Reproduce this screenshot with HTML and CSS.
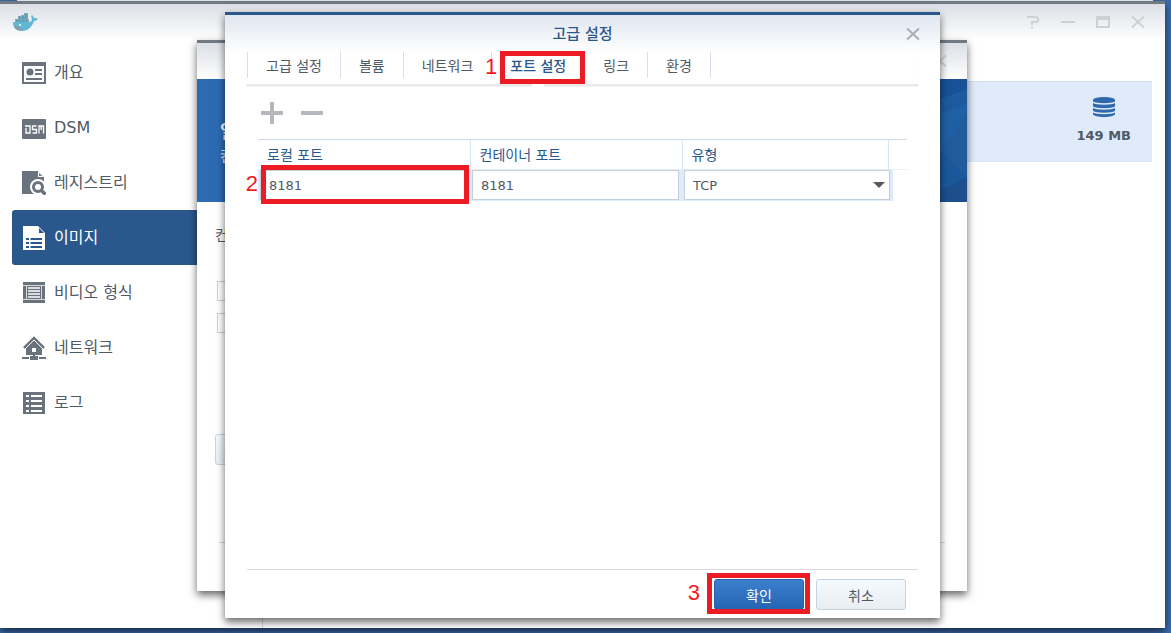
FILE: index.html
```html
<!DOCTYPE html>
<html lang="ko">
<head>
  <meta charset="UTF-8">
  <title>Docker</title>
  <link rel="stylesheet" href="styles.css">
</head>
<body>
  <div class="desktop">
    <div class="back-window"></div>

    <!-- Docker main window -->
    <div class="window docker">
      <div class="titlebar">
        <svg class="logo" viewBox="0 0 26 20">
          <path fill="#7fa9b8" d="M3 7h3V4h3V3h3V1h4v6h1v4H3z"/>
          <path fill="#5b9fb6" d="M4 8h2v2H4zM7 5h2v2H7zM7 8h2v2H7zM10 4h2v3h-2zM10 8h2v2h-2zM13 2h2v5h-2zM13 8h2v2h-2z"/>
          <path fill="#62b8d3" d="M1 10h16c2 0 3-1 3-3-1-2-1-3 0-4 1 1 2 2 2 3 1 0 3 0 4 1-1 1-2 2-4 2-2 6-6 10-12 10C4 19 1 16 1 10z"/>
          <path fill="#8b9aa3" d="M2 14c2 1 4 1 6 0 0 2 1 3 3 4.500C6 19 3 17 2 14z"/>
          <circle cx="8" cy="13" r="1" fill="#fff"/>
        </svg>
        <div class="controls">
          <button aria-label="도움말"><svg viewBox="0 0 16 16"><path d="M2 3h9c3 0 3 5 0 5H7v3M7 12.500v2"/></svg></button>
          <button aria-label="최소화"><svg viewBox="0 0 16 16"><path d="M1 8h14"/></svg></button>
          <button aria-label="최대화"><svg viewBox="0 0 16 16"><path d="M2 3v10h12V3"/><path d="M1 2h14v4H1z" class="solid"/></svg></button>
          <button aria-label="닫기"><svg viewBox="0 0 16 16"><path d="M2 2.500l12 11M14 2.500l-12 11"/></svg></button>
        </div>
      </div>
      <div class="docker-body">
        <nav class="sidebar">
          <a href="#" class="nav-item">
            <svg viewBox="0 0 24 24"><path fill="#69727d" d="M0 1h24v22H0z"/><path fill="#fff" d="M2 5h20v16H2z"/><circle cx="8" cy="11" r="3.500" fill="#69727d"/><path stroke="#69727d" stroke-width="2" d="M13 9h7M13 13h7M4 18h16"/></svg>
            <span>개요</span>
          </a>
          <a href="#" class="nav-item">
            <svg viewBox="0 0 24 24"><rect y="3" width="24" height="20" rx="1" fill="#69727d"/><path fill="none" stroke="#fff" stroke-width="1.300" d="M3 10h5v7H4v-5M14.500 10h-4v3.500h4V17h-4M17 17.500V10h4.500v7.500M19.200 10v4"/></svg>
            <span>DSM</span>
          </a>
          <a href="#" class="nav-item">
            <svg viewBox="0 0 24 24"><path fill="#69727d" d="M0 0h16l6 6v6H0zM0 10h12v13H0z"/><path fill="#fff" d="M16 0v6h6z"/><path fill="#69727d" d="M17 2v3h3z"/><circle cx="16" cy="16" r="8" fill="#fff"/><circle cx="16" cy="16" r="4.500" fill="none" stroke="#69727d" stroke-width="3"/><path stroke="#69727d" stroke-width="3.500" d="M19 19l4.500 4.500"/></svg>
            <span>레지스트리</span>
          </a>
          <a href="#" class="nav-item active">
            <svg viewBox="0 0 24 24"><path fill="#fff" d="M1 0h15l7 7v17H1z"/><path fill="#2a588c" d="M17 2v5h5z"/><path stroke="#2a588c" stroke-width="2" d="M4 13h3M8.500 13H20M4 17h3M8.500 17H20M4 21h3M8.500 21H20"/></svg>
            <span>이미지</span>
          </a>
          <a href="#" class="nav-item">
            <svg viewBox="0 0 24 24"><path fill="#69727d" d="M1 1h22v21H1z"/><path stroke="#d5d8dc" d="M1 4.500h22M1 18.500h22M4.500 4v15M19.500 4v15"/><path stroke="#fff" stroke-width="1.500" d="M6 7h12M6 10h12M6 13h12M6 16h12"/></svg>
            <span>비디오 형식</span>
          </a>
          <a href="#" class="nav-item">
            <svg viewBox="0 0 24 24"><path fill="none" stroke="#69727d" stroke-width="2.500" d="M2 12L12 2l10 10"/><path fill="#69727d" d="M4 12l8-8 8 8v7H4zM11 19h2v3h-2zM0 21h24v2H0zM8 20h8v4H8z"/><path stroke="#fff" d="M3 13l9-9 9 9M7.500 20v4M16.500 20v4" fill="none"/><path fill="#fff" d="M10 12h4v4h-4z"/></svg>
            <span>네트워크</span>
          </a>
          <a href="#" class="nav-item">
            <svg viewBox="0 0 24 24"><path fill="#69727d" d="M1 1h22v22H1z"/><path stroke="#fff" stroke-width="2" d="M4 5h3M9 5h11M4 10h3M9 10h11M4 15h3M9 15h11M4 20h3M9 20h11"/></svg>
            <span>로그</span>
          </a>
        </nav>
        <main class="images">
          <div class="image-row">
            <div class="image-size">
              <svg viewBox="0 0 22 22"><path fill="#2f68ab" d="M0 4c0-4 22-4 22 0v14c0 4-22 4-22 0z"/><path fill="none" stroke="#dfebfb" stroke-width="1.500" d="M0 6c3 2.500 19 2.500 22 0M0 11c3 2.500 19 2.500 22 0M0 15.500c3 2.500 19 2.500 22 0"/></svg>
              <span>149 MB</span>
            </div>
          </div>
        </main>
      </div>
    </div>

    <!-- container wizard, mostly covered -->
    <div class="window wizard">
      <div class="titlebar">
        <div class="controls">
          <button aria-label="닫기"><svg viewBox="0 0 16 16"><path d="M2 2.500l12 11M14 2.500l-12 11"/></svg></button>
        </div>
      </div>
      <div class="banner">
        <div class="banner-text">
          <strong>일반</strong>
          <span>컨테이너</span>
        </div>
        <svg class="banner-art" viewBox="0 0 54 123" preserveAspectRatio="none">
          <path fill="#185196" d="M0 0h54v123H0z"/>
          <path fill="#1f5fa3" d="M0 44L54 24v70L27 72z"/>
          <path fill="#1d5a9e" d="M0 44l54-20V10L0 30z"/>
          <path fill="#1b589b" d="M27 72l27 26-27 14L0 122V46z"/>
          <path fill="#215b9c" d="M27 72L54 35v63z"/>
          <path fill="#1d4f8d" d="M54 98v25H22l-4-5z"/>
        </svg>
      </div>
      <div class="wizard-body">
        <label for="privileged">컨테이너</label>
        <input type="checkbox" id="privileged">
        <input type="checkbox" aria-label="자원">
        <button class="btn" aria-label="고급"></button>
      </div>
      <div class="wizard-footer"></div>
    </div>

    <!-- advanced settings dialog -->
    <div class="window dialog">
      <div class="dialog-title">
        <h1>고급 설정</h1>
        <button aria-label="닫기"><svg viewBox="0 0 16 16"><path d="M2 2.500l12 11M14 2.500l-12 11"/></svg></button>
      </div>
      <div class="tabs">
        <button class="tab">고급 설정</button>
        <button class="tab">볼륨</button>
        <button class="tab">네트워크</button>
        <button class="tab selected">포트 설정
          <span class="mark mark-tab"><b>1</b></span>
        </button>
        <button class="tab">링크</button>
        <button class="tab">환경</button>
      </div>
      <div class="panel">
        <div class="toolbar">
          <button aria-label="추가"><svg viewBox="0 0 22 22"><path d="M9 0h4v9h9v4h-9v9H9v-9H0V9h9z"/></svg></button>
          <button aria-label="제거"><svg viewBox="0 0 22 22"><path d="M0 9h22v4H0z"/></svg></button>
        </div>
        <table class="ports">
          <colgroup>
            <col class="col-local"><col class="col-container"><col class="col-type"><col class="col-gap"><col>
          </colgroup>
          <thead>
            <tr><th>로컬 포트</th><th>컨테이너 포트</th><th>유형</th><td></td><td></td></tr>
          </thead>
          <tbody>
            <tr>
              <td><div class="field"><input type="text" value="8181" aria-label="로컬 포트"><span class="mark mark-field"><b>2</b></span></div></td>
              <td><div class="field"><input type="text" value="8181" aria-label="컨테이너 포트"></div></td>
              <td colspan="2">
                <div class="field">
                  <select aria-label="유형"><option>TCP</option><option>UDP</option></select>
                  <svg class="caret" viewBox="0 0 12 6"><path d="M0 0h12L6 6z"/></svg>
                </div>
              </td>
              <td></td>
            </tr>
          </tbody>
        </table>
      </div>
      <div class="footer">
        <button class="btn primary">확인<span class="mark mark-ok"><b>3</b></span></button>
        <button class="btn">취소</button>
      </div>
    </div>
  </div>
</body>
</html>
```

FILE: styles.css
```css
* {
  box-sizing: border-box;
}
body {
  margin: 0;
  font-family: "DejaVu Sans", "Noto Sans CJK KR", sans-serif;
  font-size: 14px;
  color: #505a64;
}
button {
  font: inherit;
  color: inherit;
  border: none;
  background: none;
  padding: 0;
  cursor: pointer;
}
svg {
  display: block;
}
.desktop {
  position: relative;
  height: 100vh;
  overflow: hidden;
  background-color: #3b6cae;
}
.back-window {
  height: 1px;
  margin: 0 18px 0 17px;
  background-color: #f1f4f7;
}

/* windows */
.window {
  position: absolute;
  display: flex;
  flex-direction: column;
  background-color: #fff;
  border-top: 3px solid #717982;
  box-shadow: 0 4px 8px rgba(0,0,0,0.6);
}
.docker {
  top: 1px;
  left: 0;
  right: 6px;
  bottom: 5px;
}
.wizard {
  top: 40px;
  left: 197px;
  right: 204px;
  bottom: 42px;
}
.dialog {
  top: 12px;
  left: 225px;
  right: 231px;
  bottom: 15px;
  border-top-color: #2a588c;
}
.titlebar {
  display: flex;
  justify-content: space-between;
  align-items: center;
  height: 36px;
  padding: 0 19px 0 12px;
  background: linear-gradient(#dbdfe5, #fff);
}
.logo {
  width: 26px;
  height: 20px;
}
.controls {
  display: flex;
  gap: 19px;
  margin-left: auto;
}
.controls svg, .dialog-title svg {
  width: 16px;
  height: 16px;
  fill: none;
  stroke: #cdd1d5;
  stroke-width: 2;
}
.controls .solid {
  fill: #cdd1d5;
  stroke: none;
}

/* docker */
.docker-body {
  display: flex;
  flex: 1;
}
.sidebar {
  width: 263px;
  padding: 5px 12px 0;
  border-right: 1px solid #d8dce0;
}
.nav-item {
  display: flex;
  align-items: center;
  gap: 8px;
  height: 55px;
  padding-left: 10px;
  border-radius: 3px;
  font-size: 16px;
  line-height: 20px;
  color: #505a64;
  text-decoration: none;
}
.nav-item svg {
  width: 24px;
  height: 24px;
}
.nav-item.active {
  background-color: #2a588c;
  color: #fff;
}
.images {
  flex: 1;
  padding: 41px 13px 0 13px;
}
.image-row {
  display: flex;
  justify-content: flex-end;
  height: 81px;
  padding: 14px 21px 0;
  background-color: #dfebfb;
  border-top: 1px solid #d0dfee;
  border-bottom: 1px solid #d8e6f5;
}
.image-size {
  display: flex;
  flex-direction: column;
  align-items: center;
  gap: 8px;
  font-size: 13px;
  line-height: 20px;
  font-weight: bold;
}
.image-size svg {
  width: 22px;
  height: 22px;
}

/* wizard */
.banner {
  display: flex;
  justify-content: space-between;
  height: 123px;
  background-color: #2c6ab2;
  color: #fff;
}
.banner-text {
  display: flex;
  flex-direction: column;
  gap: 2px;
  padding: 42px 0 0 23px;
  line-height: 22px;
}
.banner-text strong {
  font-size: 18px;
}
.banner-art {
  width: 54px;
  height: 100%;
}
.wizard-body {
  display: flex;
  flex-direction: column;
  align-items: flex-start;
  flex: 1;
  margin: 0 22px;
  padding-top: 22px;
  border-bottom: 1px solid #d9dbdd;
}
.wizard-body label {
  margin: 0 0 34px -4px;
  line-height: 23px;
}
.wizard-body input {
  appearance: none;
  width: 20px;
  height: 20px;
  margin: 0 0 12px -2px;
  border: 1px solid #c6d0dc;
}
.wizard-body .btn {
  margin: 89px 0 0 -4px;
}
.wizard-footer {
  height: 48px;
}

/* dialog */
.dialog-title {
  display: grid;
  grid-template-columns: 1fr auto 1fr;
  align-items: center;
  height: 37px;
  padding: 0 19px;
  background: linear-gradient(#dfe6f0, #fff);
}
.dialog-title h1 {
  grid-column: 2;
  margin: 0;
  font-size: 15px;
  line-height: 20px;
  font-weight: 500;
  color: #2a588c;
}
.dialog-title button {
  justify-self: end;
}
.dialog-title svg {
  stroke: #a9afb5;
}
.tabs {
  display: flex;
  height: 34px;
  margin: 0 22px;
  padding-bottom: 6px;
  border-bottom: 2px solid #e8e8e8;
  box-shadow: 0 1px 1px #f4f4f4;
}
.tab {
  position: relative;
  padding: 0 18px;
  border-right: 1px solid #d5e0ec;
}
.tab:first-child {
  border-left: 1px solid #d5e0ec;
}
.tab.selected {
  color: #2a588c;
  font-weight: 500;
}
.tab.selected::after {
  content: "";
  position: absolute;
  top: 100%;
  left: 50%;
  width: 12px;
  height: 10px;
  margin-left: -6px;
  background-color: #fff;
}
.panel {
  flex: 1;
  margin: 0 33px;
  padding-top: 16px;
}
.toolbar {
  display: flex;
  gap: 18px;
  padding-left: 3px;
  margin-bottom: 15px;
}
.toolbar svg {
  width: 22px;
  height: 22px;
  fill: #b4b8bd;
}
.ports {
  width: 100%;
  table-layout: fixed;
  border-collapse: collapse;
  border-top: 1px solid #d0dce8;
}
.ports .col-local, .ports .col-container {
  width: 212px;
}
.ports .col-type {
  width: 206px;
}
.ports .col-gap {
  width: 5px;
}
.ports thead tr {
  height: 30px;
  border-bottom: 1px solid #e8eef4;
}
.ports th {
  padding: 0 9px;
  border-right: 1px solid #d9e6f3;
  font-weight: normal;
  line-height: 18px;
  text-align: left;
  color: #2a588c;
}
.ports td {
  padding: 0;
}
.ports tbody td:not(:last-child) {
  background-color: #dfebfb;
}
.field {
  position: relative;
  margin: 0 3px 1px 2px;
}
.field input, .field select {
  display: block;
  appearance: none;
  width: 100%;
  height: 30px;
  padding: 0 8px;
  border: 1px solid #c3cfdb;
  border-radius: 0;
  background-color: #fff;
  font: inherit;
  font-size: 13px;
  color: #505a64;
}
.caret {
  position: absolute;
  top: 12px;
  right: 5px;
  width: 12px;
  height: 6px;
  fill: #505a64;
}
.footer {
  display: flex;
  justify-content: flex-end;
  gap: 12px;
  margin: 0 22px;
  padding: 9px 12px 8px;
  border-top: 1px solid #d9dbdd;
}
.btn {
  position: relative;
  width: 90px;
  height: 31px;
  border: 1px solid #c6d3e0;
  border-radius: 3px;
  background: linear-gradient(#f5fafe, #e9eef3);
}
.btn.primary {
  border-color: #2360a8;
  background: linear-gradient(#3c7fcf, #2565b3);
  color: #fff;
}

/* red step marks */
.mark {
  position: absolute;
  z-index: 1;
  border: 5px solid #ed1c24;
}
.mark b {
  position: absolute;
  right: 100%;
  top: 50%;
  margin: -13px 8px 0 0;
  font-family: "Liberation Sans", sans-serif;
  font-size: 22px;
  font-weight: normal;
  line-height: 24px;
  color: #ed1c24;
}
.mark-tab {
  inset: -1px -1px -6px 8px;
}
.mark-field {
  inset: -5px -2px -4px 1px;
}
.mark-ok {
  inset: -7px -7px -5px -8px;
}
.mark-ok b {
  margin-right: 12px;
}
```
